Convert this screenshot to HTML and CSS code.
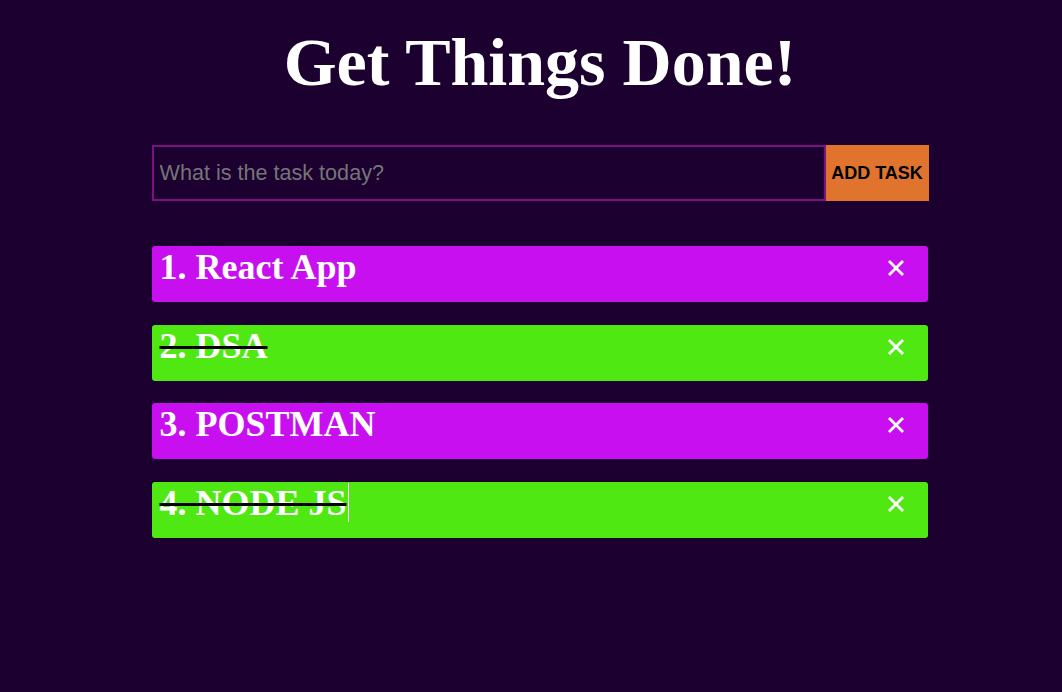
FILE: index.html
```html
<!DOCTYPE html>
<html>
<head>
<meta charset="utf-8">
<link rel="stylesheet" href="styles.css">
</head>
<body>
<div class="app">
  <h1 class="title">Get Things Done!</h1>
  <div class="wrapper">
    <form class="todo-form">
      <input class="todo-input" type="text" placeholder="What is the task today?">
      <button class="todo-btn" type="button">ADD TASK</button>
    </form>
    <ul class="todo-list">
      <li class="todo todo-purple"><span class="todo-text">1. React App</span><svg class="todo-del" viewBox="0 0 18 18"><path d="M2 2L16 16M16 2L2 16"/></svg></li>
      <li class="todo todo-green"><span class="todo-text done">2. DSA</span><svg class="todo-del" viewBox="0 0 18 18"><path d="M2 2L16 16M16 2L2 16"/></svg></li>
      <li class="todo todo-purple"><span class="todo-text">3. POSTMAN</span><svg class="todo-del" viewBox="0 0 18 18"><path d="M2 2L16 16M16 2L2 16"/></svg></li>
      <li class="todo todo-green"><span class="todo-text done caret">4. NODE JS</span><svg class="todo-del" viewBox="0 0 18 18"><path d="M2 2L16 16M16 2L2 16"/></svg></li>
    </ul>
  </div>
</div>
</body>
</html>
```

FILE: styles.css
```css
html, body {
  margin: 0;
  padding: 0;
  background: #1b0030;
  overflow: hidden;
}
.app {
  width: 1064px;
  margin-left: 8px;
  display: flex;
  flex-direction: column;
  align-items: center;
}
.title {
  font-family: "Liberation Serif", serif;
  font-weight: bold;
  font-size: 68px;
  color: #ffffff;
  margin: 19px 0 0 0;
  line-height: 86px;
}
.wrapper {
  width: 777px;
  display: flex;
  flex-direction: column;
}
.todo-form {
  display: flex;
  margin: 40px 0 0 0;
  height: 56px;
}
.todo-input {
  flex: 1;
  box-sizing: border-box;
  height: 56px;
  background: transparent;
  border: 2px solid #7a1380;
  outline: none;
  padding: 0 6px;
  font-family: "Liberation Sans", Arial, sans-serif;
  font-size: 21.6px;
  color: #fff;
  margin: 0;
}
.todo-input::placeholder {
  color: #757575;
}
.todo-btn {
  width: 103px;
  height: 56px;
  border: none;
  margin: 0;
  padding: 0;
  background: #e0742e;
  font-family: "Liberation Sans", Arial, sans-serif;
  font-weight: bold;
  font-size: 18px;
  color: #000;
}
.todo-list {
  list-style: none;
  margin: 45px 1px 0 0;
  padding: 0;
  display: flex;
  flex-direction: column;
  gap: 22.67px;
}
.todo {
  height: 56px;
  box-sizing: border-box;
  border-radius: 3px;
  display: flex;
  justify-content: space-between;
  align-items: flex-start;
  padding: 0 23px 0 8px;
}
.todo-purple { background: #c70ff0; }
.todo-green { background: #50e812; }
.todo-text {
  font-family: "Liberation Serif", serif;
  font-weight: bold;
  font-size: 36px;
  line-height: 42px;
  color: #ffffff;
  position: relative;
}
.todo-text.done {
  text-decoration: line-through;
  text-decoration-color: #000;
  text-decoration-thickness: 3px;
}
.todo-text.caret::after {
  content: "";
  position: absolute;
  right: -2px;
  top: 1px;
  width: 1px;
  height: 39px;
  background: #ffffff;
}
.todo-del {
  width: 18px;
  height: 18px;
  margin-top: 13px;
  fill: none;
  stroke: #ffffff;
  stroke-width: 2.8;
}
```
